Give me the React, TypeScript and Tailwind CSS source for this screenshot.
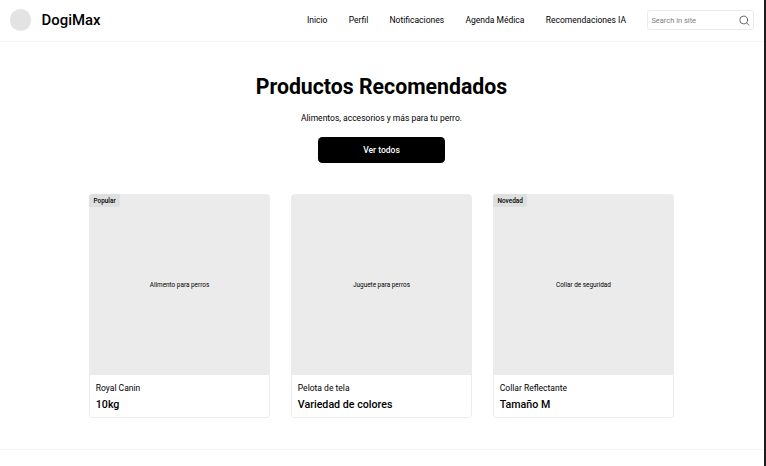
type Product = { label: string; name: string; detail: string; badge?: string };

const products: Product[] = [
  { label: 'Alimento para perros', name: 'Royal Canin', detail: '10kg', badge: 'Popular' },
  { label: 'Juguete para perros', name: 'Pelota de tela', detail: 'Variedad de colores' },
  { label: 'Collar de seguridad', name: 'Collar Reflectante', detail: 'Tamaño M', badge: 'Novedad' },
];

const links = ['Inicio', 'Perfil', 'Notificaciones', 'Agenda Médica', 'Recomendaciones IA'];

function SearchIcon() {
  return (
    <svg className="size-[11px] shrink-0" viewBox="0 0 11 11" fill="none" stroke="#444444" strokeWidth="0.8" strokeLinecap="round">
      <circle cx="4.7" cy="5" r="3.9" />
      <path d="M7.5 7.8 9.8 10.1" />
    </svg>
  );
}

function Header() {
  return (
    <header className="flex h-[42px] items-center border-b border-[#f5f5f5] pr-[10px] pb-[1px] pl-[9.5px]">
      <div className="size-[21.3px] rounded-full bg-[#e3e3e3]" />
      <div className="ml-[10.7px] text-[14.93px] leading-5 font-medium">DogiMax</div>
      <nav className="ml-auto flex gap-[21.3px] text-[8.53px] leading-3">
        {links.map((link) => (
          <a key={link}>{link}</a>
        ))}
      </nav>
      <div className="ml-[21px] flex h-[20px] w-[107px] items-center justify-between rounded-[3px] border border-[#ebebeb] pr-[3px] pl-[3.4px]">
        <span className="pt-px text-[7.47px] leading-3 text-[#7f7f7f]">Search in site</span>
        <SearchIcon />
      </div>
    </header>
  );
}

function Card({ product }: { product: Product }) {
  return (
    <article className="relative h-[224px] w-[181px] overflow-hidden rounded-[3.2px]">
      <div className="h-full rounded-[3.2px] border border-[#ececec]">
        <div className="flex h-[180px] items-center justify-center bg-[#ebebeb] text-[6.4px] leading-2">{product.label}</div>
        <div className="px-[5.8px] pt-[7px]">
          <div className="text-[8.53px] leading-[12.8px]">{product.name}</div>
          <div className="mt-[3px] text-[10.67px] leading-[14.9px] font-medium">{product.detail}</div>
        </div>
      </div>
      {product.badge && (
        <span className="absolute top-0 left-0 rounded-br-[3px] bg-[#dfdfdf] px-[4.5px] pt-px text-[6.4px] leading-[12px] font-medium">
          {product.badge}
        </span>
      )}
    </article>
  );
}

export default function App() {
  return (
    <div className="flex h-[466px] w-[766px] overflow-hidden bg-white font-['Roboto',sans-serif] text-black">
      <div className="min-w-0 flex-1">
        <Header />
        <main className="flex h-[408px] flex-col items-center border-b border-[#f5f5f5] pt-[32px] pr-[1px]">
          <h1 className="text-[21.28px] leading-[26px] font-bold">Productos Recomendados</h1>
          <p className="mt-[11.5px] text-[8.53px] leading-[12.8px]">Alimentos, accesorios y más para tu perro.</p>
          <button className="mt-[12.7px] h-[25.6px] w-[127.5px] rounded-[4.3px] bg-black text-[8.53px] leading-3 font-medium text-white">
            Ver todos
          </button>
          <section className="mt-[31.4px] flex gap-[21px]">
            {products.map((product) => (
              <Card key={product.name} product={product} />
            ))}
          </section>
        </main>
      </div>
      <div className="w-[2px] bg-[#1e1e1e]" />
    </div>
  );
}
